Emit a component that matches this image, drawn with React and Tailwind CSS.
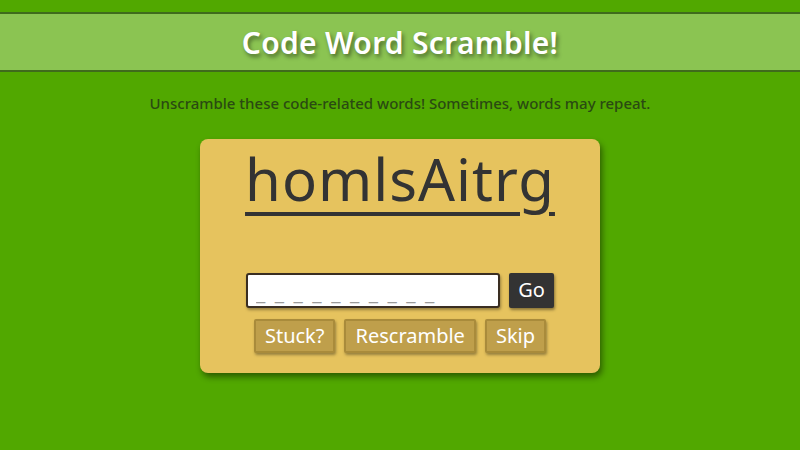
import React from 'react';

const font = { fontFamily: '"Noto Sans", "Open Sans", sans-serif' };

const App = () => {
  return (
    <div className="min-h-[450px] w-full bg-[#51a800] pt-3" style={font}>
      <header className="border-y-2 border-[#3f6b1c] bg-[#8bc452] h-[60px] flex items-center justify-center">
        <h1 className="text-[30px] font-semibold tracking-[0.3px] text-white [text-shadow:2px_3px_4px_rgba(0,0,0,0.45)]">
          Code Word Scramble!
        </h1>
      </header>

      <p className="mt-[20px] text-center text-[15px] font-medium text-[#2a4a12]">
        Unscramble these code-related words! Sometimes, words may repeat.
      </p>

      <div className="mx-auto mt-[24px] w-[400px] h-[234px] rounded-lg bg-[#e6c35e] shadow-[2px_4px_6px_rgba(0,0,0,0.45)] flex flex-col items-center">
        <div className="mt-[4px] text-[58px] leading-[72px] tracking-[1px] text-[#333333] underline decoration-[4px] underline-offset-[11px]">
          homlsAitrg
        </div>

        <div className="mt-[58px] flex items-center gap-[9px]">
          <input
            className="w-[254px] h-[35px] bg-white border-2 border-[#3a2e22] rounded-[3px] px-2 pt-[4px] text-[21px] tracking-[2px] text-[#333] placeholder:text-[#9a9a9a] shadow-[1px_2px_3px_rgba(0,0,0,0.35)] outline-none"
            placeholder="_ _ _ _ _ _ _ _ _ _"
            style={font}
          />
          <button
            className="h-[35px] w-[45px] bg-[#333333] text-white text-[20px] rounded-[2px] shadow-[1px_2px_3px_rgba(0,0,0,0.4)]"
            style={font}
          >
            Go
          </button>
        </div>

        <div className="mt-[11px] flex items-center gap-[9px]">
          {['Stuck?', 'Rescramble', 'Skip'].map((label) => (
            <button
              key={label}
              className="h-[34px] px-[9px] bg-[#bf9f4b] border-2 border-[#a98b3b] text-white text-[20px] rounded-[2px] shadow-[1px_2px_3px_rgba(0,0,0,0.35)]"
              style={font}
            >
              {label}
            </button>
          ))}
        </div>
      </div>
    </div>
  );
};

export default App;
